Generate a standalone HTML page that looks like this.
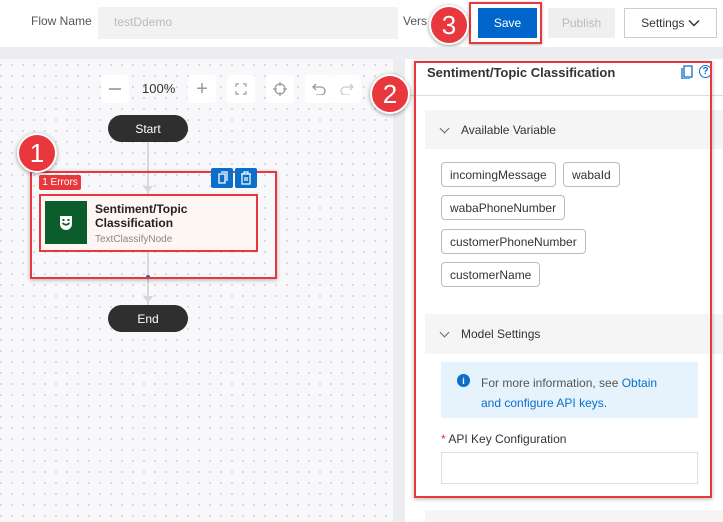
<!DOCTYPE html>
<html><head><style>
*{box-sizing:border-box;margin:0;padding:0}
body{width:723px;height:522px;overflow:hidden;font-family:"Liberation Sans",sans-serif;background:#fff;position:relative;font-size:12px;color:#333}
.a{position:absolute}
.canvas{left:0;top:59px;width:393px;height:463px;background-color:#f8f8fa;background-image:radial-gradient(circle,#a8b0cc 0.6px,transparent 0.9px);background-size:11px 11px;background-position:-4.5px 0.5px}
.tb{width:28px;height:28px;background:#fff;border-radius:3px;top:75px;display:flex;align-items:center;justify-content:center;color:#999;font-size:18px}
.pill{background:#2f2f2f;color:#fff;border-radius:14px;width:80px;height:27px;left:108px;display:flex;align-items:center;justify-content:center;font-size:12px}
.badge{width:40px;height:40px;border-radius:50%;background:#e8383d;color:#fff;font-size:26px;display:flex;align-items:center;justify-content:center;box-shadow:0 1px 4px rgba(0,0,0,.4);border:2px solid #fff}
.tag{height:25px;border:1px solid #bbb;border-radius:4px;padding:0 8px;font-size:12px;display:flex;align-items:center;color:#333}
.sec{left:425px;width:298px;background:#f5f5f5;display:flex;align-items:center;padding-left:36px;font-size:12px;color:#333}
.sec:before{content:"";position:absolute;left:16px;top:15px;width:6px;height:6px;border-right:1.3px solid #666;border-bottom:1.3px solid #666;transform:rotate(45deg)}
</style></head><body>
<div class="a" style="left:31px;top:14px;font-size:12px;color:#555">Flow Name</div>
<div class="a" style="left:98px;top:7px;width:300px;height:32px;background:#f2f2f2;color:#bbb;padding:8px 16px;font-size:12px">testDdemo</div>
<div class="a" style="left:403px;top:14px;color:#555">Vers</div>
<div class="a" style="left:469px;top:2px;width:73px;height:42px;border:2px solid #e8383d;box-shadow:0 1px 3px rgba(0,0,0,.3)"></div>
<div class="a" style="left:478px;top:8px;width:59px;height:30px;background:#0066cc;color:#fff;display:flex;align-items:center;justify-content:center">Save</div>
<div class="a" style="left:548px;top:8px;width:67px;height:30px;background:#efefef;color:#bbb;display:flex;align-items:center;justify-content:center">Publish</div>
<div class="a" style="left:624px;top:8px;width:93px;height:30px;border:1px solid #ccc;display:flex;align-items:center;justify-content:center;color:#333">Settings&nbsp;<svg width="12" height="8"><path d="M1 1.5l5 5 5-5" stroke="#333" stroke-width="1.5" fill="none"/></svg></div>
<div class="a badge" style="left:429px;top:5px">3</div>

<div class="a" style="left:0;top:47px;width:723px;height:12px;background:#ebedf0"></div>
<div class="a" style="left:393px;top:47px;width:12px;height:475px;background:#ebedf0"></div>
<div class="a canvas"></div>

<div class="a tb" style="left:101px"><div style="width:12px;height:2px;background:#aaa"></div></div>
<div class="a" style="left:142px;top:81px;font-size:13px;color:#333">100%</div>
<div class="a tb" style="left:188px;font-size:20px">+</div>
<div class="a tb" style="left:227px"><svg width="12" height="12"><path d="M1 4V1h3M8 1h3v3M11 8v3H8M4 11H1V8" stroke="#aaa" stroke-width="1.4" fill="none"/></svg></div>
<div class="a tb" style="left:266px"><svg width="14" height="14"><circle cx="7" cy="7" r="5" stroke="#999" stroke-width="1.3" fill="none"/><path d="M7 0v4M7 10v4M0 7h4M10 7h4" stroke="#999" stroke-width="1.3"/></svg></div>
<div class="a tb" style="left:305px"><svg width="14" height="12"><path d="M4 1L1 4l3 3M1 4h8a4 4 0 010 8H4" stroke="#999" stroke-width="1.3" fill="none"/></svg></div>
<div class="a tb" style="left:333px"><svg width="14" height="12"><path d="M10 1l3 3-3 3M13 4H5a4 4 0 000 8h5" stroke="#ccc" stroke-width="1.3" fill="none"/></svg></div>

<div class="a" style="left:147px;top:142px;width:2px;height:163px;background:#d8d8d8"></div>
<div class="a" style="left:143px;top:186px;border-left:5px solid transparent;border-right:5px solid transparent;border-top:7px solid #d8d8d8"></div>
<div class="a" style="left:143px;top:296px;border-left:5px solid transparent;border-right:5px solid transparent;border-top:7px solid #d8d8d8"></div>
<div class="a" style="left:146px;top:275px;width:4px;height:4px;border-radius:50%;background:#1a5fb4"></div>
<div class="a pill" style="top:115px">Start</div>
<div class="a pill" style="top:305px">End</div>

<div class="a" style="left:30px;top:171px;width:247px;height:108px;border:2px solid #e8383d;box-shadow:0 1px 4px rgba(0,0,0,.3)"></div>
<div class="a" style="left:39px;top:175px;width:42px;height:15px;background:#e8383d;color:#fff;font-size:10px;border-radius:2px;display:flex;align-items:center;justify-content:center">1 Errors</div>
<div class="a" style="left:211px;top:168px;width:22px;height:20px;background:#0a6fc8;border-radius:2px"><svg width="22" height="20"><path d="M8 6h6v9H8zM10 4h6v9" stroke="#fff" stroke-width="1.3" fill="none"/></svg></div>
<div class="a" style="left:235px;top:168px;width:22px;height:20px;background:#0a6fc8;border-radius:2px"><svg width="22" height="20"><path d="M6 6h10M9 6V4h4v2M7 6v10h8V6M10 9v4M12 9v4" stroke="#fff" stroke-width="1.2" fill="none"/></svg></div>
<div class="a" style="left:39px;top:194px;width:219px;height:58px;border:2px solid #e8383d;background:#fdf6f3"></div>
<div class="a" style="left:45px;top:201px;width:42px;height:43px;background:#0b5e2c"><svg width="42" height="43"><path d="M15 15h12v8a6 6 0 01-12 0z" fill="#fff"/><path d="M17.5 22q3.5 3.5 7 0" stroke="#0b5e2c" stroke-width="1.6" fill="none"/><rect x="17.5" y="18" width="2" height="2" fill="#0b5e2c"/><rect x="22.5" y="18" width="2" height="2" fill="#0b5e2c"/></svg></div>
<div class="a" style="left:95px;top:202px;font-size:12px;font-weight:bold;line-height:14px;color:#222">Sentiment/Topic<br>Classification</div>
<div class="a" style="left:95px;top:234px;font-size:10px;color:#888">TextClassifyNode</div>
<div class="a badge" style="left:17px;top:133px">1</div>

<div class="a" style="left:405px;top:59px;width:318px;height:463px;background:#fff"></div>
<div class="a" style="left:405px;top:95px;width:318px;height:1px;background:#ddd"></div>
<div class="a" style="left:427px;top:65px;font-size:13px;font-weight:bold;color:#333">Sentiment/Topic Classification</div>
<div class="a" style="left:681px;top:65px"><svg width="12" height="14"><path d="M3 1h8v11H3zM1 3v11h8" stroke="#0a6fc8" stroke-width="1.3" fill="none"/></svg></div>
<div class="a" style="left:699px;top:65px;width:13px;height:13px;border:1.3px solid #0a6fc8;border-radius:50%;color:#0a6fc8;font-size:10px;font-weight:bold;display:flex;align-items:center;justify-content:center">?</div>
<div class="a sec" style="top:110px;height:39px">Available Variable</div>
<div class="a tag" style="left:441px;top:162px">incomingMessage</div>
<div class="a tag" style="left:563px;top:162px">wabaId</div>
<div class="a tag" style="left:441px;top:195px">wabaPhoneNumber</div>
<div class="a tag" style="left:441px;top:229px">customerPhoneNumber</div>
<div class="a tag" style="left:441px;top:262px">customerName</div>
<div class="a sec" style="top:314px;height:40px">Model Settings</div>
<div class="a" style="left:441px;top:362px;width:257px;height:56px;background:#e6f3fc"></div>
<div class="a" style="left:457px;top:374px;width:13px;height:13px;border-radius:50%;background:#0a6fc8;color:#fff;font-size:9px;font-weight:bold;display:flex;align-items:center;justify-content:center">i</div>
<div class="a" style="left:481px;top:373px;font-size:12px;line-height:20px;color:#555">For more information, see <span style="color:#0a6fc8">Obtain</span><br><span style="color:#0a6fc8">and configure API keys</span>.</div>
<div class="a" style="left:441px;top:432px;font-size:12px;color:#333"><span style="color:#e8383d">*</span> API Key Configuration</div>
<div class="a" style="left:441px;top:452px;width:257px;height:32px;border:1px solid #ddd"></div>
<div class="a" style="left:425px;top:510px;width:298px;height:12px;background:#f5f5f5"></div>
<div class="a" style="left:414px;top:61px;width:298px;height:437px;border:2px solid #e8383d;box-shadow:0 1px 4px rgba(0,0,0,.3)"></div>
<div class="a badge" style="left:370px;top:74px">2</div>
</body></html>
